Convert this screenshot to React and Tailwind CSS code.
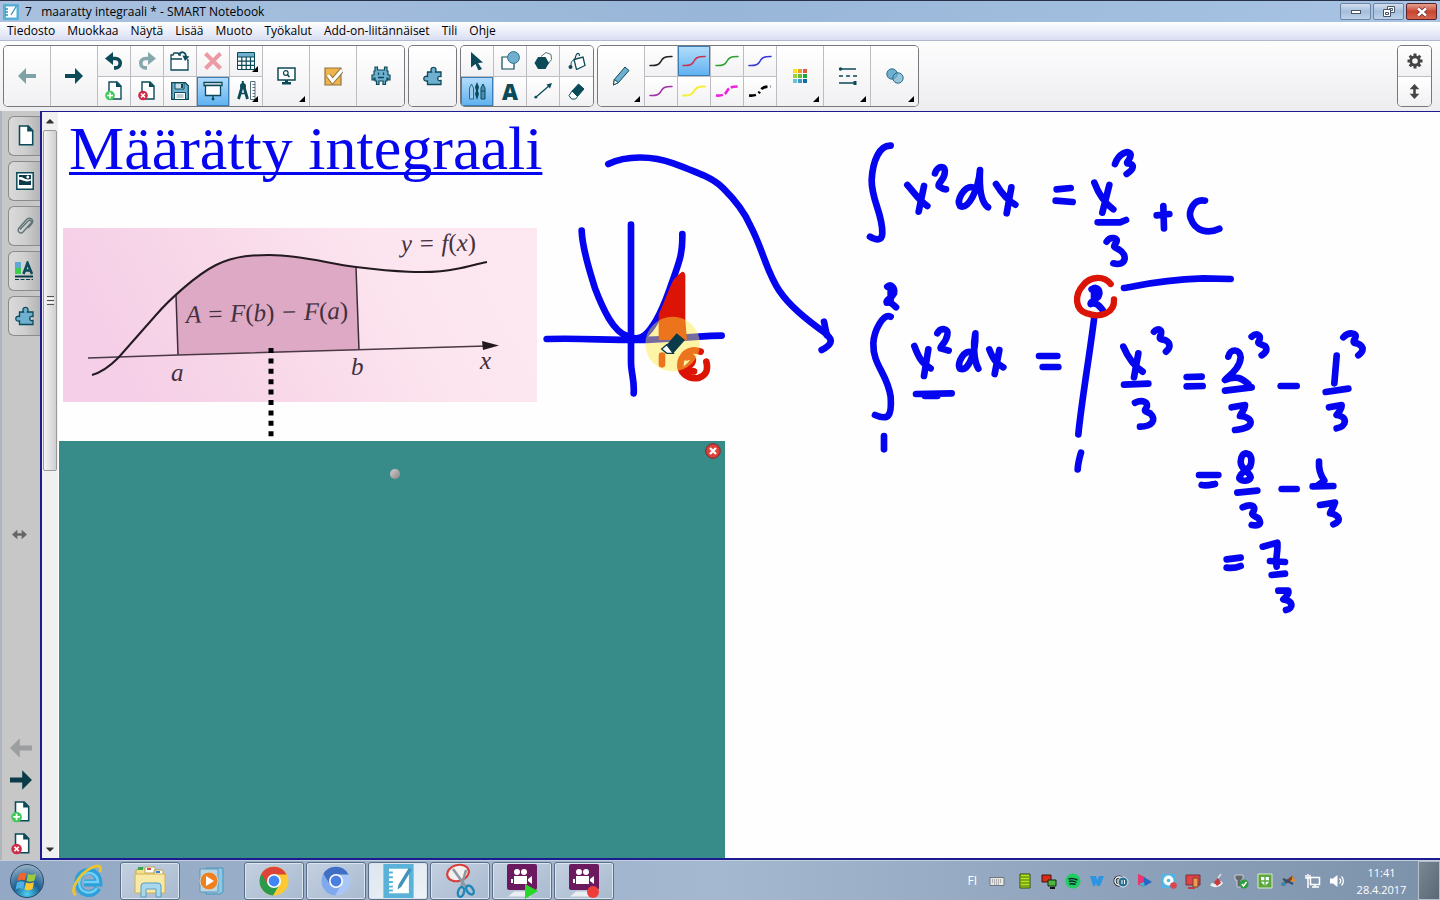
import { FaCaretUp, FaCaretDown } from 'react-icons/fa';
import clsx from 'clsx';

const DARK = '#0b4a59';
const SKY = '#6fafd0';

const menus = ['Tiedosto', 'Muokkaa', 'Näytä', 'Lisää', 'Muoto', 'Työkalut', 'Add-on-liitännäiset', 'Tili', 'Ohje'];

function Svg({ w = 20, h = w, vb, children }) {
  return (
    <svg width={w} height={h} viewBox={vb || `0 0 ${w} ${h}`} fill="none" className="shrink-0">
      {children}
    </svg>
  );
}

// ---------- toolbar icons ----------

function Arrow({ left, color = DARK, size = 18 }) {
  return (
    <Svg w={size} vb="0 0 18 18">
      <path d={left ? 'M0 9l8-8v6h10v4H8v6z' : 'M18 9l-8-8v6H0v4h10v6z'} fill={color} />
    </Svg>
  );
}

function Undo({ flip, color = DARK }) {
  return (
    <Svg w={18}>
      <g transform={flip ? 'matrix(-1 0 0 1 18 0)' : undefined}>
        <path d="M8 0v13L0 6.500z" fill={color} />
        <path d="M6 6.500h4.500a4.700 4.700 0 0 1 0 9.400H9" stroke={color} strokeWidth="3.600" />
      </g>
    </Svg>
  );
}

function PageIcon({ badge, plain }) {
  return (
    <Svg w={plain ? 20 : 18} h={plain ? 22 : 20} vb="0 0 18 20">
      <path d="M4 1h8l4 4v13H4z" fill="#fff" stroke={DARK} strokeWidth="1.400" />
      <path d="M11 0.500v5.500h5.500z" fill={DARK} />
      {badge && <circle cx="5" cy="14.500" r="4.800" fill={badge === 'add' ? '#3fc95a' : '#cf2a48'} />}
      {badge === 'add' && <path d="M5 11.500v6M2 14.500h6" stroke="#fff" strokeWidth="1.600" />}
      {badge === 'del' && <path d="M3 12.500l4 4M7 12.500l-4 4" stroke="#fff" strokeWidth="1.600" />}
    </Svg>
  );
}

function OpenIcon() {
  return (
    <Svg w={20}>
      <path d="M1 19V4h2l1-2h4l1 2h2M17 9h1v10H1V8h11" fill="#fff" stroke={DARK} strokeWidth="1.300" />
      <path d="M9 3c3-3 7-2 7 3" stroke={DARK} strokeWidth="1.800" />
      <path d="M12.500 4.500l7 1-4.500 4.500z" fill={DARK} />
    </Svg>
  );
}

function SaveIcon() {
  return (
    <Svg w={18}>
      <path d="M0.700 0.700h13.600l3 3v13.600H0.700z" fill={SKY} stroke={DARK} strokeWidth="1.300" />
      <path d="M4 1h9v6H4z" fill="#c8dfea" stroke={DARK} />
      <path d="M10 2h2v4h-2z" fill={DARK} />
      <path d="M3.500 10.500h11v7h-11z" fill="#fff" stroke={DARK} />
      <path d="M5.500 13h7M5.500 15h7" stroke="#7d9aa5" />
    </Svg>
  );
}

function CrossIcon() {
  return (
    <Svg w={18}>
      <path d="M1.500 1.500l15 15M16.500 1.500l-15 15" stroke="#ee9aa4" strokeWidth="4" />
    </Svg>
  );
}

function ScreenIcon() {
  return (
    <Svg w={20}>
      <path d="M1 1.500h18v3H1z" fill="#fff" stroke={DARK} strokeWidth="1.300" />
      <path d="M2.500 4.500h15v10h-15z" fill="#fff" stroke={DARK} strokeWidth="1.300" />
      <path d="M10 14.500v4" stroke={DARK} strokeWidth="1.300" />
      <circle cx="10" cy="18" r="1.400" fill={DARK} />
    </Svg>
  );
}

function TableIcon() {
  return (
    <Svg w={18}>
      <path d="M0.500 0.500h17v17h-17z" fill="#fff" stroke={DARK} />
      <path d="M1 1h16v4H1z" fill={SKY} />
      <path d="M0 5h18M0 9.200h18M0 13.400h18M4.800 5v13M9.200 5v13M13.500 5v13" stroke={DARK} strokeWidth="1.200" />
    </Svg>
  );
}

function MeasureIcon() {
  return (
    <Svg w={19} h={20}>
      <path d="M5.800 0v4" stroke={DARK} strokeWidth="2" />
      <circle cx="6" cy="5" r="3" fill={DARK} />
      <path d="M5 6L1.500 18M7 6l3.500 12" stroke={DARK} strokeWidth="2.800" />
      <path d="M2 12.500h8" stroke={DARK} strokeWidth="1.600" />
      <path d="M13.500 0.500h4.500v18h-4.500z" fill="#fff" stroke="#58707a" />
      <path d="M15.500 3.500H18M15.500 6.500H18M15.500 9.500H18M15.500 12.500H18M15.500 15.500H18" stroke="#58707a" />
    </Svg>
  );
}

function MonitorIcon() {
  return (
    <Svg w={19} h={18}>
      <path d="M1 1h17v12H1z" fill="#fff" stroke={DARK} strokeWidth="1.500" />
      <circle cx="8.800" cy="6" r="2.300" stroke={DARK} strokeWidth="1.200" />
      <path d="M10.500 7.800l2 2.200" stroke={DARK} strokeWidth="1.600" />
      <path d="M8 13h3v2h3v2.500H5V15h3z" fill={DARK} />
    </Svg>
  );
}

function CheckIcon() {
  return (
    <Svg w={19}>
      <path d="M1 1h16v17H1z" fill="#f0b44c" stroke="#8d7440" strokeWidth="1.200" />
      <path d="M4 8l4.500 6L18 3" stroke="#8d7440" strokeWidth="5" />
      <path d="M4 8l4.500 6L18 3" stroke="#fff" strokeWidth="3.200" />
    </Svg>
  );
}

function InvaderIcon() {
  return (
    <Svg w={20}>
      <path
        d="M4 1h2.500v3h7V1H16v4h1v4h2v5h-2v-2h-1v3h-1.500v3.500H12V15H8v3.500H5.500V15H4v-3H3v2H1V9h2V5h1z"
        fill={SKY}
        stroke={DARK}
        strokeWidth="1.200"
      />
      <path d="M7.500 6.500v2.500M12.500 6.500v2.500M7 11.500h6" stroke={DARK} strokeWidth="1.300" />
    </Svg>
  );
}

function PuzzleIcon() {
  return (
    <Svg w={20}>
      <path
        d="M4.500 6H8.500C7.300 3.500 8 1.300 10.500 1.300S13.700 3.500 12.500 6H18V10.500C15.500 10 14.700 11.300 14.700 12.500S15.500 15 18 14.500V18.500H4.500V15C2.500 15.500 0.800 14.700 0.800 12.700S2.500 9.800 4.500 10.500z"
        fill={SKY}
        stroke={DARK}
        strokeWidth="1.300"
      />
    </Svg>
  );
}

function PointerIcon() {
  return (
    <Svg w={14} h={18}>
      <path d="M1 0l12 10.500-5 0.500 4 6-3.500 1.500L5.500 12 1 15.500z" fill={DARK} />
    </Svg>
  );
}

function ShapesIcon() {
  return (
    <Svg w={19}>
      <path d="M1 6h12v12H1z" fill="#fff" stroke={DARK} strokeWidth="1.200" />
      <circle cx="12.500" cy="6.500" r="5.900" fill={SKY} stroke="#2d6f88" />
    </Svg>
  );
}

function PolygonIcon() {
  return (
    <Svg w={18}>
      <path d="M7 4.500l5-4 5 2 0.500 5-4 5" fill="#fff" stroke="#58707a" />
      <path d="M4 5h7.500l3.500 6-3.500 6H4l-3.500-6z" fill={DARK} />
    </Svg>
  );
}

function BucketIcon() {
  return (
    <Svg w={18}>
      <path d="M6 7.500l9-2.500 2 8.500-8.500 4z" fill="#fff" stroke={DARK} strokeWidth="1.300" />
      <path d="M7 7.500c1-7 4-8 4.500-3.500" stroke={DARK} strokeWidth="1.200" />
      <path d="M6 8C3 9 3 11 3 14" stroke={DARK} />
      <circle cx="2.500" cy="15" r="2" fill={DARK} />
    </Svg>
  );
}

function PensIcon() {
  return (
    <Svg w={18}>
      <path d="M1.500 6l2-4 2 4v11h-4z" fill="#9dcbe8" stroke="#2c6a83" />
      <path d="M9 0l2 5-1 4 1 3-2 6-2-6 1-3-1-4z" fill={DARK} />
      <path d="M13 6l2-4 2 4v11h-4z" fill="#4c8fae" stroke={DARK} />
      <path d="M13 9h4" stroke={DARK} />
    </Svg>
  );
}

function LineIcon() {
  return (
    <Svg w={18} h={16}>
      <path d="M1.500 14.500L16 2" stroke={DARK} strokeWidth="1.300" />
      <circle cx="1.800" cy="14.200" r="1.400" fill={DARK} />
      <path d="M18 0l-5.500 1.500 3.500 4z" fill={DARK} />
    </Svg>
  );
}

function EraserIcon() {
  return (
    <Svg w={17} h={17}>
      <path d="M10.500 1l5.500 5-6.500 7.500-5.500-5.500z" fill={DARK} stroke={DARK} />
      <path d="M4 8l5.500 5.500-2 2.500H3.500L1 12.500z" fill="#fff" stroke={DARK} />
    </Svg>
  );
}

function PencilIcon() {
  return (
    <Svg w={18} h={20}>
      <path d="M13 1l4 3.500L6.500 16.500l-5 2.500 0.800-5.500z" fill={SKY} stroke={DARK} />
      <path d="M2.300 13.500l4.200 3-5 2.500z" fill="#fff" stroke={DARK} />
    </Svg>
  );
}

function Squiggle({ color, width = 1.5, dash }) {
  return (
    <Svg w={24} h={12}>
      <path
        d="M1 10.500c6 0.500 9-1 10.500-3.500C13.500 3 15 1.500 23 1.500"
        stroke={color}
        strokeWidth={width}
        strokeDasharray={dash}
        strokeLinecap={dash ? 'butt' : 'round'}
      />
    </Svg>
  );
}

function ColorGrid() {
  const colors = ['#fbe21a', '#f49a2a', '#e0574c', '#a3cf2f', '#5fbf3c', '#17a838', '#6cc0d8', '#3a9bc8', '#1468a8'];
  return (
    <span className="grid grid-cols-3 gap-px">
      {colors.map((c) => (
        <span key={c} className="size-[4px]" style={{ backgroundColor: c }} />
      ))}
    </span>
  );
}

function LineStyles() {
  return (
    <Svg w={19} h={18}>
      <path d="M2 2h16M1 16h16" stroke={DARK} strokeWidth="1.300" />
      <path d="M1 9h18" stroke={DARK} strokeWidth="1.300" strokeDasharray="4 3" />
      <circle cx="2.500" cy="2" r="1.700" fill={DARK} />
      <path d="M15.500 14h3v4h-3z" fill={DARK} />
    </Svg>
  );
}

function Circles() {
  return (
    <Svg w={18} h={16}>
      <circle cx="6" cy="6" r="5.200" fill={SKY} stroke="#2d6f88" />
      <circle cx="12" cy="10" r="5.200" fill={SKY} fillOpacity="0.700" stroke="#2d6f88" />
    </Svg>
  );
}

function GearIcon() {
  return (
    <Svg w={16}>
      <circle cx="8" cy="8" r="4.200" stroke="#444" strokeWidth="2.800" />
      <path
        d="M8 0.500v3M8 12.500v3M0.500 8h3M12.500 8h3M2.700 2.700l2 2M11.300 11.300l2 2M2.700 13.300l2-2M11.300 4.700l2-2"
        stroke="#444"
        strokeWidth="3"
      />
    </Svg>
  );
}

function StretchIcon({ horizontal }) {
  return (
    <Svg w={15} vb="0 0 14 14">
      <g transform={horizontal ? 'rotate(90 7 7)' : undefined}>
        <path d="M7 0l4.500 5H8.200v4h3.300L7 14 2.500 9h3.300V5H2.500z" fill={horizontal ? '#666' : '#444'} />
      </g>
    </Svg>
  );
}

// ---------- toolbar ----------

function Tool({ label, active, menu, children }) {
  return (
    <button
      type="button"
      aria-label={label}
      className={clsx(
        'relative flex items-center justify-center flex-1',
        active
          ? 'bg-linear-to-b from-[#b4defb] to-[#5cb0f0] ring-1 ring-inset ring-[#3d7fb5]'
          : 'bg-linear-to-b from-white to-[#f1f1f3]'
      )}
    >
      {children}
      {menu && <span className="absolute right-1 bottom-1 border-[3px] border-black border-t-transparent border-l-transparent" />}
    </button>
  );
}

function Group({ children }) {
  return (
    <div className="flex h-[60px] divide-x divide-[#bcbcc2] rounded-[4px] ring-1 ring-[#77777c] overflow-hidden">
      {children}
    </div>
  );
}

function Stack({ children }) {
  return <div className="flex flex-col w-[33px] divide-y divide-[#bcbcc2]">{children}</div>;
}

function Wide({ children }) {
  return <div className="flex w-[47px]">{children}</div>;
}

function Toolbar() {
  return (
    <div className="flex items-center justify-between h-[70px] pl-1 pr-[9px] bg-linear-to-b from-[#fdfdfe] to-[#ededf0]">
      <div className="flex gap-[5px]">
        <Group>
          <Wide><Tool label="Edellinen sivu"><Arrow left color="#7ea2a5" /></Tool></Wide>
          <Wide><Tool label="Seuraava sivu"><Arrow /></Tool></Wide>
          <Stack>
            <Tool label="Kumoa"><Undo /></Tool>
            <Tool label="Lisää sivu"><PageIcon badge="add" /></Tool>
          </Stack>
          <Stack>
            <Tool label="Tee uudelleen"><Undo flip color="#86a8ac" /></Tool>
            <Tool label="Poista sivu"><PageIcon badge="del" /></Tool>
          </Stack>
          <Stack>
            <Tool label="Avaa"><OpenIcon /></Tool>
            <Tool label="Tallenna"><SaveIcon /></Tool>
          </Stack>
          <Stack>
            <Tool label="Poista"><CrossIcon /></Tool>
            <Tool label="Näytön varjostin" active><ScreenIcon /></Tool>
          </Stack>
          <Stack>
            <Tool label="Taulukko" menu><TableIcon /></Tool>
            <Tool label="Mittaustyökalut" menu><MeasureIcon /></Tool>
          </Stack>
          <Wide><Tool label="Näytä sivu" menu><MonitorIcon /></Tool></Wide>
          <Wide><Tool label="Vastaus"><CheckIcon /></Tool></Wide>
          <Wide><Tool label="Aktiviteetit"><InvaderIcon /></Tool></Wide>
        </Group>
        <Group>
          <Wide><Tool label="Lisäosat"><PuzzleIcon /></Tool></Wide>
        </Group>
        <Group>
          <Stack>
            <Tool label="Valitse"><PointerIcon /></Tool>
            <Tool label="Kynät" active><PensIcon /></Tool>
          </Stack>
          <Stack>
            <Tool label="Muodot"><ShapesIcon /></Tool>
            <Tool label="Teksti">
              <span className="font-['Noto_Sans'] text-[22px] leading-6 font-black text-[#0b4a59]">A</span>
            </Tool>
          </Stack>
          <Stack>
            <Tool label="Monikulmiot"><PolygonIcon /></Tool>
            <Tool label="Viivat"><LineIcon /></Tool>
          </Stack>
          <Stack>
            <Tool label="Täyttö"><BucketIcon /></Tool>
            <Tool label="Pyyhekumi"><EraserIcon /></Tool>
          </Stack>
        </Group>
        <Group>
          <Wide><Tool label="Kynätyyppi" menu><PencilIcon /></Tool></Wide>
          <Stack>
            <Tool label="Musta kynä"><Squiggle color="#222" /></Tool>
            <Tool label="Violetti kynä"><Squiggle color="#a030a8" /></Tool>
          </Stack>
          <Stack>
            <Tool label="Punainen kynä" active><Squiggle color="#d03050" /></Tool>
            <Tool label="Keltainen kynä"><Squiggle color="#f6ee3c" width={2} /></Tool>
          </Stack>
          <Stack>
            <Tool label="Vihreä kynä"><Squiggle color="#30a030" /></Tool>
            <Tool label="Katkoviiva"><Squiggle color="#f020e0" width={2.6} dash="7 2" /></Tool>
          </Stack>
          <Stack>
            <Tool label="Sininen kynä"><Squiggle color="#3838d8" /></Tool>
            <Tool label="Pisteviiva"><Squiggle color="#000" width={2.6} dash="7 3 2 3" /></Tool>
          </Stack>
          <Wide><Tool label="Väri" menu><ColorGrid /></Tool></Wide>
          <Wide><Tool label="Viivatyyli" menu><LineStyles /></Tool></Wide>
          <Wide><Tool label="Läpinäkyvyys" menu><Circles /></Tool></Wide>
        </Group>
      </div>
      <Group>
        <Stack>
          <Tool label="Asetukset"><GearIcon /></Tool>
          <Tool label="Siirrä työkalurivi"><StretchIcon /></Tool>
        </Stack>
      </Group>
    </div>
  );
}

// ---------- title bar ----------

function WindowButton({ label, close, children }) {
  return (
    <button
      type="button"
      aria-label={label}
      className={clsx(
        'flex items-center justify-center w-[31px] h-[17px] rounded-[2px] border',
        close
          ? 'border-[#5a2028] bg-linear-to-b from-[#e3a08f] via-[#c9452f] to-[#d4654c]'
          : 'border-[#6d84a3] bg-linear-to-b from-[#d3e0f0] via-[#a5bedb] to-[#bdd2ea]'
      )}
    >
      {children}
    </button>
  );
}

function TitleBar() {
  return (
    <header className="flex items-center h-[22px] pl-[3px] pr-[3px] border-t border-[#27324a] bg-linear-to-r from-[#a9c1df] via-[#98b6d8] to-[#a9c4e4]">
      <Svg w={16}>
        <path d="M0 0h16v16H0z" fill="#58b0d8" />
        <path d="M3 2.500h10.500v11H3z" fill="#fff" />
        <path d="M2 5h3M2 8h3M2 11h3M13.500 2L8 11" stroke="#3a8fb8" strokeWidth="1.300" />
      </Svg>
      <h1 className="flex-1 pl-[6px] text-[12px] leading-4 text-black whitespace-pre">7   maaratty integraali * - SMART Notebook</h1>
      <div className="flex gap-0.5">
        <WindowButton label="Pienennä">
          <span className="w-[10px] h-[4px] border border-[#4a5568] bg-white" />
        </WindowButton>
        <WindowButton label="Palauta">
          <Svg w={12} h={11}>
            <path d="M4.500 0.500h7v6h-7z" fill="#fff" stroke="#4a5568" />
            <path d="M6.500 2.500h3v2h-3z" stroke="#4a5568" />
            <path d="M0.500 3.500h7v7h-7z" fill="#fff" stroke="#4a5568" />
            <path d="M2.500 6.500h3v2h-3z" stroke="#4a5568" />
          </Svg>
        </WindowButton>
        <WindowButton label="Sulje" close>
          <Svg w={12} h={10}>
            <path d="M2 1.500l8 7M10 1.500l-8 7" stroke="#5c3038" strokeWidth="4" />
            <path d="M2 1.500l8 7M10 1.500l-8 7" stroke="#fff" strokeWidth="2.400" />
          </Svg>
        </WindowButton>
      </div>
    </header>
  );
}

function MenuBar() {
  return (
    <nav className="flex items-center gap-3 h-[19px] pl-[7px] bg-linear-to-b from-white via-[#eceffa] to-[#d9def2] border-b border-[#b4b8cc]">
      {menus.map((m) => (
        <button key={m} type="button" className="text-[12px] leading-4 text-black">
          {m}
        </button>
      ))}
    </nav>
  );
}

// ---------- side bar ----------

function GalleryIcon() {
  return (
    <Svg w={18}>
      <path d="M0.800 0.800h16.400v16.400H0.800z" fill="#fff" stroke={DARK} strokeWidth="1.500" />
      <path d="M3 3h12v10H3z" fill="#0b3a48" />
      <path d="M3 5.500c4-2 5 3.500 12 1.500v1.500C9 11 7 7.500 3 7.500z" fill="#fff" />
      <circle cx="11.800" cy="5" r="1.500" fill="#fff" />
    </Svg>
  );
}

function ClipIcon() {
  return (
    <Svg w={18} h={20}>
      <path
        d="M4 13.500L12 5c2-2 4.500 0.500 2.700 2.500L7 16c-2.500 2.500-6.500-0.500-4-4L10.500 3.500c3-3 8 0 5.500 4L12 12"
        stroke="#5f7478"
        strokeWidth="1.400"
      />
    </Svg>
  );
}

function PropertiesIcon() {
  return (
    <Svg w={19} h={20}>
      <path d="M0 1h6v6H0z" fill="#5fa8d3" />
      <path d="M0 7h6v6H0z" fill="#3ccf4e" />
      <path d="M8.500 13L12.500 2l4.500 11M10 9.500h5.500" stroke={DARK} strokeWidth="2.600" />
      <path d="M0 15.500h18" stroke="#0b3a48" strokeWidth="2" />
      <path d="M0 18.500h18" stroke="#0b3a48" strokeDasharray="4 1.500" />
    </Svg>
  );
}

const tabs = [
  { label: 'Sivulajittelu', icon: <PageIcon plain /> },
  { label: 'Galleria', icon: <GalleryIcon /> },
  { label: 'Liitteet', icon: <ClipIcon /> },
  { label: 'Ominaisuudet', icon: <PropertiesIcon /> },
  { label: 'Lisäosat', icon: <PuzzleIcon /> },
];

const pageButtons = [
  { label: 'Edellinen', icon: <Arrow left color="#9c9f9f" size={22} /> },
  { label: 'Seuraava', icon: <Arrow color="#0b3a48" size={22} /> },
  { label: 'Uusi sivu', icon: <PageIcon badge="add" plain /> },
  { label: 'Poista sivu', icon: <PageIcon badge="del" plain /> },
];

function SideBar() {
  return (
    <aside className="flex flex-col w-10 shrink-0 bg-[#c7c7c7] border-l-2 border-[#aeb4bb] pt-[5px]">
      <div className="flex flex-col gap-[5px] pl-[6px]">
        {tabs.map((t) => (
          <button
            key={t.label}
            type="button"
            aria-label={t.label}
            className="flex items-center justify-center h-10 rounded-l-md border border-r-0 border-[#8b8b8b] bg-linear-to-r from-[#dadada] via-[#cfcfcf] to-[#b4b4b4]"
          >
            {t.icon}
          </button>
        ))}
      </div>
      <button type="button" aria-label="Siirrä sivupalkki" className="flex flex-1 items-center pl-[10px]">
        <StretchIcon horizontal />
      </button>
      <div className="flex flex-col">
        {pageButtons.map((b) => (
          <button key={b.label} type="button" aria-label={b.label} className="flex items-center justify-center h-8">
            {b.icon}
          </button>
        ))}
      </div>
    </aside>
  );
}

function ScrollBar() {
  return (
    <div className="flex flex-col items-center w-[16px] shrink-0 bg-[#f0f0f0] text-[#333]">
      <FaCaretUp className="h-[18px] w-2" />
      <div className="flex flex-col items-center justify-center gap-px w-[14px] h-[341px] rounded-[2px] border border-[#9a9a9a] bg-linear-to-r from-[#f4f4f4] to-[#cfcfd2]">
        <span className="w-[7px] h-px bg-[#555]" />
        <span className="w-[7px] h-px bg-white" />
        <span className="w-[7px] h-px bg-[#555]" />
        <span className="w-[7px] h-px bg-white" />
        <span className="w-[7px] h-px bg-[#555]" />
      </div>
      <FaCaretDown className="mt-auto h-[18px] w-2" />
    </div>
  );
}

// ---------- board ----------

function IntegralFigure() {
  return (
    <svg
      viewBox="0 0 474 174"
      className="absolute left-[5px] top-[116px] w-[474px] h-[174px] font-['Liberation_Serif',serif]"
      fill="none"
    >
      <defs>
        <linearGradient id="paper" x1="0" y1="0.200" x2="1" y2="0">
          <stop offset="0" stopColor="#f5cfe7" />
          <stop offset="0.350" stopColor="#f9dae9" />
          <stop offset="0.650" stopColor="#fce5ef" />
          <stop offset="1" stopColor="#fde8f1" />
        </linearGradient>
      </defs>
      <path d="M0 0h474v174H0z" fill="url(#paper)" />
      <path d="M113 67C125 57 140 43 153 37C173 27 193 27 206 27C240 27 266 36 293 39L296 122L115 127z" fill="#dda9c5" />
      <path d="M113 67L115 127M293 39L296 122" stroke="#3d2c38" strokeWidth="1.500" />
      <path d="M25 130L115 127L423 118" stroke="#4a3844" strokeWidth="1.400" />
      <path d="M419 113L436 117.500L420 122z" fill="#221a20" />
      <path
        d="M29 147C43 143 51 134 56 129L93 87C106 72 133 47 153 37C173 27 193 27 206 27C240 27 266 36 293 39C326 43 366 47 393 41C406 39 413 36 424 34"
        stroke="#221a20"
        strokeWidth="2"
      />
      <g fill="#43303c" fontSize="25" fontStyle="italic">
        <text x="123" y="95" transform="rotate(-1.500 123 95)">
          A = F<tspan fontStyle="normal">(</tspan>b<tspan fontStyle="normal">)</tspan> − F
          <tspan fontStyle="normal">(</tspan>a<tspan fontStyle="normal">)</tspan>
        </text>
        <text x="338" y="24" transform="rotate(-1 338 24)">
          y = f<tspan fontStyle="normal">(</tspan>x<tspan fontStyle="normal">)</tspan>
        </text>
        <text x="108" y="153">a</text>
        <text x="288" y="147">b</text>
        <text x="417" y="141">x</text>
      </g>
    </svg>
  );
}

const graphInk = [
  'M205 72C260 45 340 48 400 70C480 100 520 115 550 145C590 185 615 220 630 255C670 330 680 400 720 455C750 500 800 540 860 582',
  'M852 545L860 585C880 600 875 615 845 630',
  'M125 272C127 330 150 395 165 445C190 510 220 575 262 588C285 600 305 595 320 580C350 550 375 490 395 430C420 360 428 340 427 282',
  'M273 254V665C273 700 284 720 281 760',
  'M20 597C130 594 180 600 300 600C380 600 420 590 545 587',
];

const firstInk = [
  'M122 47C90 45 68 90 65 150C64 210 98 250 97 310C96 332 80 332 60 320',
  'M172 165C195 190 205 210 232 228M222 168L206 245',
  'M255 130C262 105 290 105 284 130C282 150 262 160 266 168C272 172 280 178 288 178',
  'M368 172C345 165 318 210 330 228C355 240 385 180 390 120C388 160 390 215 414 232',
  'M438 162C455 190 470 210 496 224M484 172L470 250',
  'M620 178L662 174M617 212L668 216',
  'M733 158C745 190 765 220 790 238M778 165L757 248',
  'M743 277H810L828 270',
  'M795 102C805 72 838 55 842 75C840 92 828 95 832 100C856 100 852 118 830 132',
  'M770 335C780 318 808 322 798 338C788 350 792 352 806 358C835 375 828 410 790 400',
  'M920 256L958 252M940 228L942 295',
  'M1065 212C1030 205 1015 245 1022 265C1035 305 1075 312 1108 296',
  'M112 470C125 460 135 475 132 490C125 505 105 510 110 518C125 515 130 525 138 532M122 470V510',
  'M122 560C100 550 72 600 70 640C68 705 112 730 122 800C126 860 115 872 75 855',
  'M102 918V958',
  'M193 648C205 680 215 700 242 715M235 658L222 738',
  'M262 610C272 590 298 595 292 615C288 640 268 650 272 655L296 662',
  'M365 668C345 655 318 700 330 716C355 725 378 670 376 610C370 640 370 690 385 716',
  'M418 658C430 690 440 700 460 712M448 660L434 732',
  'M567 678H622M578 711H625',
  'M198 792L305 790M225 798H262',
];

const secondInk = [
  'M162 54C200 50 240 32 400 25L482 27',
  'M72 148C58 260 34 400 25 493',
  'M33 548C28 565 24 580 23 598',
  'M65 58C85 45 92 65 85 80C70 95 60 95 62 102C80 95 90 110 98 120M72 65V100',
  'M160 230C175 265 195 290 218 305M205 250L192 322',
  'M162 344L235 341',
  'M252 185C262 172 282 178 270 200C268 208 272 208 285 210C305 220 300 235 288 245',
  'M195 398C215 388 240 395 228 415C220 425 230 425 240 430C262 450 245 470 210 470',
  'M350 321L395 320M350 349L398 348',
  'M475 260C480 235 510 235 512 262C510 295 480 315 465 330C500 315 515 325 535 342',
  'M465 362L545 352',
  'M545 200C560 187 575 195 567 213C560 222 575 222 585 228C595 240 585 250 575 256',
  'M485 412L525 405C525 420 512 430 510 438C550 440 560 475 495 480',
  'M632 348H680',
  'M800 257L793 340',
  'M767 366L835 356',
  'M820 202C835 185 865 187 855 205C848 215 850 220 862 220C885 230 880 245 865 256',
  'M777 412L815 405C815 420 805 428 800 435C835 440 830 470 800 475',
  'M387 615H445M395 645C410 648 420 645 435 642',
  'M528 550C545 552 548 570 540 590C530 600 508 610 508 625C515 635 538 635 542 622C540 605 512 600 512 575C512 560 520 550 528 550',
  'M502 668L562 662',
  'M518 712C540 702 560 705 550 725C540 735 555 738 565 745C580 765 560 768 545 765',
  'M635 657H680',
  'M747 575C745 600 755 620 763 632L745 645',
  'M728 649L790 648',
  'M750 705L795 698C790 715 780 725 780 730C810 735 815 755 790 763',
  'M470 868L512 863M470 893C485 895 500 893 512 888',
  'M578 830L622 818C625 840 615 870 620 890M600 873L645 876',
  'M605 915L645 911',
  'M625 962L655 962C658 975 645 982 640 988C670 992 672 1015 648 1020',
];

// pen strokes are kept in the pen's own units, three to a pixel
function Ink({ x, y, w, h, strokes, children }) {
  return (
    <svg x={x} y={y} width={w} height={h} viewBox={`0 0 ${w * 3} ${h * 3}`} overflow="visible">
      <g stroke="#0505f0" strokeWidth="20" strokeLinecap="round" strokeLinejoin="round">
        {strokes.map((d) => (
          <path key={d} d={d} />
        ))}
      </g>
      {children}
    </svg>
  );
}

function Board() {
  return (
    <main className="relative flex-1 overflow-hidden bg-[#fefefe]">
      <h2 className="absolute left-[11px] top-0 font-['Liberation_Serif',serif] text-[62px] leading-[72px] text-[#0505f0] whitespace-nowrap underline decoration-[3px] underline-offset-[3px] [text-decoration-skip-ink:none]">
        Määrätty integraali
      </h2>
      <IntegralFigure />
      <svg
        viewBox="58 112 1382 747"
        preserveAspectRatio="xMinYMin slice"
        className="absolute inset-0 size-full"
        fill="none"
      >
        <path d="M271 348V437" stroke="#000" strokeWidth="5" strokeDasharray="5 5.400" />
        <Ink x={540} y={140} w={320} h={340} strokes={graphInk}>
          <path
            d="M427 395C433 395 436 400 436 408V540L441 600H356V522C372 490 385 450 400 420C410 410 418 400 427 395z"
            fill="#dc1405"
          />
          <g stroke="#dc1405" strokeWidth="20" strokeLinecap="round" strokeLinejoin="round">
            <path d="M366 647V673" />
            <path d="M482 635C455 625 430 635 422 665C415 700 445 718 475 714C500 705 505 690 499 665" />
            <path d="M440 652C460 640 465 665 450 675C435 690 430 690 462 694" />
          </g>
          <circle cx="398" cy="612" r="82" fill="#ffe93c" fillOpacity="0.450" />
          <path d="M410 580L435 600L400 640L380 614z" fill="#0b3a48" />
          <path d="M380 614L400 640H380L365 627z" fill="#fff" stroke="#0b3a48" strokeWidth="4" />
        </Ink>
        <Ink x={850} y={130} w={400} h={340} strokes={firstInk} />
        <Ink x={1070} y={270} w={320} h={350} strokes={secondInk}>
          <path
            d="M122 42C100 15 60 20 40 45C12 75 15 120 50 130C90 145 135 130 132 88"
            stroke="#dc1405"
            strokeWidth="19"
            strokeLinecap="round"
          />
        </Ink>
      </svg>
      <section className="absolute left-px top-[329px] bottom-0 w-[666px] bg-[#378c8a]">
        <button type="button" aria-label="Sulje varjostin" className="absolute right-1 top-[2px]">
          <Svg w={16}>
            <circle cx="8" cy="8" r="7.300" fill="#dc4038" stroke="#7c2a2c" />
            <path d="M5 5l6 6M11 5l-6 6" stroke="#fff" strokeWidth="2.400" />
          </Svg>
        </button>
        <span className="absolute left-[331px] top-7 size-[10px] rounded-full bg-linear-to-br from-[#d8d0d0] to-[#8a8484]" />
      </section>
    </main>
  );
}

// ---------- task bar ----------

function StartOrb() {
  return (
    <Svg w={36} vb="0 0 36 36">
      <defs>
        <radialGradient id="orb" cx="0.500" cy="0.900" r="0.900">
          <stop offset="0" stopColor="#4fd0f0" />
          <stop offset="0.450" stopColor="#1b5f92" />
          <stop offset="1" stopColor="#9cb4c8" />
        </radialGradient>
      </defs>
      <circle cx="18" cy="18" r="16.500" fill="url(#orb)" stroke="#2b4a68" />
      <path d="M10 11c3-2 5-1.500 7.500-0.500l-1.500 7c-2.500-1-4.500-1-7.500 0.500z" fill="#f0652a" />
      <path d="M19 11c2.500 1 5 1 8-0.500l-1.500 7c-3 1.500-5.500 1.500-8 0.500z" fill="#9ccb3c" />
      <path d="M8 19.500c3-1.500 5-1.500 7.500-0.500L14 26c-2.500-1-4.500-1-7.500 0.500z" fill="#4fb0e8" />
      <path d="M17 19.500c2.500 1 5 1 8-0.500l-1.500 7c-3 1.500-5.500 1.500-8 0.500z" fill="#fbc72f" />
    </Svg>
  );
}

function ExplorerE() {
  return (
    <Svg w={34}>
      <path d="M27 24c-5 9-19 7-20-5C6 5 27 2 28 19H13" stroke="#2f9fdc" strokeWidth="7" />
      <path d="M26 24c-5 7-17 6-18-5C8 7 26 5 27 18H13" stroke="#6fd0f4" strokeWidth="2.500" />
      <path d="M5 31C-2 27 8 10 20 4c8-4 11-2 9 4" stroke="#ecc52c" strokeWidth="2.600" />
    </Svg>
  );
}

function FolderIcon() {
  return (
    <Svg w={34}>
      <path d="M3 6l7-3 2 3h17v22H3z" fill="#f5e08c" stroke="#c9a544" />
      <path d="M12 3h10v6H12zM21 6h9v5h-9z" fill="#fff" stroke="#b9a860" />
      <path d="M5 3h5v3H5z" fill="#34a853" />
      <path d="M14 4h4v2h-4z" fill="#d9483b" />
      <path d="M23 7h4v2h-4z" fill="#3b83d9" />
      <path d="M2 10h30v19H2z" fill="#f8e9a6" stroke="#d2b050" />
      <path d="M8 33V22q0-3 3-3h14q3 0 3 3v11h-5v-8H13v8z" fill="#a8d8ee" stroke="#5a9cc0" />
    </Svg>
  );
}

function PlayerIcon() {
  return (
    <Svg w={30}>
      <path d="M9 2h17v24l-3 2H9z" fill="#8cc8e4" stroke="#4d93b8" />
      <path d="M3 3h18v23H3z" fill="#b9d5e6" stroke="#5f97b8" />
      <circle cx="12" cy="15" r="9" fill="#f07f1e" stroke="#c9d8e0" />
      <path d="M9 10l8 5-8 5z" fill="#fff" />
    </Svg>
  );
}

function BrowserIcon({ colors }) {
  const [top, left, right, hub] = colors;
  return (
    <Svg w={30}>
      <circle cx="15" cy="15" r="14.500" fill={right} />
      <path d="M2.400 7.800A14.500 14.500 0 0 0 14 29.500L20.500 18.500L15 15z" fill={left} />
      <path d="M2.400 7.800A14.500 14.500 0 0 1 27.600 8.500H15L9 18.500z" fill={top} />
      <circle cx="15" cy="15" r="7" fill="#fff" />
      <circle cx="15" cy="15" r="5.400" fill={hub} />
    </Svg>
  );
}

function NotebookIcon() {
  return (
    <Svg w={31} h={34} vb="0 0 32 36">
      <path d="M0 0h32v36H0z" fill="#5ab2d8" />
      <path d="M6 5h21v26H6z" fill="#fff" />
      <path d="M4 9h6M4 14h6M4 19h6M4 24h6M4 28h6" stroke="#5ab2d8" strokeWidth="2" />
      <path d="M27 4l3 2-11 18-4 3 1-5z" fill="#3f93bc" />
    </Svg>
  );
}

function SnipIcon() {
  return (
    <Svg w={32} h={36}>
      <ellipse cx="14" cy="10" rx="11" ry="8" fill="#f4f0f0" stroke="#d8403c" strokeWidth="2.200" transform="rotate(-15 14 10)" />
      <path d="M9 6l13 18M22 7l-5 18" stroke="#8e98a2" strokeWidth="2.600" />
      <ellipse cx="17" cy="29" rx="3" ry="5" stroke="#1f86b8" strokeWidth="2.400" transform="rotate(15 17 29)" />
      <ellipse cx="26" cy="27" rx="3" ry="5" stroke="#1f86b8" strokeWidth="2.400" transform="rotate(-35 26 27)" />
    </Svg>
  );
}

function CamIcon({ recording }) {
  return (
    <Svg w={34} h={36}>
      <path d="M9 28h14l4 6H2z" fill="#e8eef4" stroke="#b8c4d0" />
      <rect x="2" y="1" width="30" height="26" rx="2" fill="#6b1a60" />
      <circle cx="12" cy="9" r="3" fill="#fff" />
      <circle cx="19" cy="9" r="3" fill="#fff" />
      <path d="M9 13h13v8H9zM23 16l4-3v8l-4-3zM6 16h2v4H6z" fill="#fff" />
      {recording ? <circle cx="26" cy="29" r="6" fill="#f03c38" /> : <path d="M20 21l13 7-13 8z" fill="#2bd62b" />}
    </Svg>
  );
}

const apps = [
  { label: 'Internet Explorer', icon: <ExplorerE /> },
  { label: 'Resurssienhallinta', icon: <FolderIcon />, open: true },
  { label: 'Media Player', icon: <PlayerIcon /> },
  { label: 'Chrome', icon: <BrowserIcon colors={['#dc4437', '#2b9a4c', '#fcc934', '#4285f4']} />, open: true },
  { label: 'Chromium', icon: <BrowserIcon colors={['#3f6fc4', '#7fa9ec', '#a9c6f6', '#4a7fe0']} />, open: true },
  { label: 'SMART Notebook', icon: <NotebookIcon />, open: true, current: true },
  { label: 'Leikkaustyökalu', icon: <SnipIcon />, open: true },
  { label: 'Näytön toisto', icon: <CamIcon />, open: true },
  { label: 'Näytön tallennus', icon: <CamIcon recording />, open: true },
];

const tray = [
  { name: 'Muistio', art: <><path d="M3 1h10v14H3z" fill="#b8e61c" stroke="#2a4a10" /><path d="M4 4h8M4 7h8M4 10h8M4 13h8" stroke="#466e10" /></> },
  { name: 'Näytöt', art: <><path d="M1 2h9v7H1z" fill="#dc2a14" stroke="#401510" /><path d="M7 7h8v6H7z" fill="#4fb83c" stroke="#102810" /><path d="M9 15h5" stroke="#111" strokeWidth="2" /></> },
  { name: 'Spotify', art: <><circle cx="8" cy="8" r="7.500" fill="#1fce60" /><path d="M3.500 6c3-1 6-0.500 9 1M4 8.500c3-1 5-0.500 7.500 1M4.500 11c2.500-0.500 4-0.500 6 0.500" stroke="#123" strokeWidth="1.400" /></> },
  { name: 'Wunder', art: <><path d="M1 3h6l1 4 2-4h5l-4 10H8L7 10l-1 3H4z" fill="#2c94e0" /></> },
  { name: 'Pilvi', art: <><circle cx="6" cy="8" r="4" stroke="#222" strokeWidth="3" /><circle cx="6" cy="8" r="4" stroke="#fff" strokeWidth="1.400" /><circle cx="10" cy="9" r="5" fill="#2a6f94" stroke="#dfe8ee" /><path d="M9 7v4M11.500 7v4" stroke="#fff" /></> },
  { name: 'Play', art: <><path d="M1 1l7 3-2 9-5-1z" fill="#e8376c" /><path d="M7 4l8 5-9 5z" fill="#2766c8" /><path d="M2 11l5-2 1 5z" fill="#35bcd8" /></> },
  { name: 'Levy', art: <><path d="M1 1h13v14H1z" fill="#50b4e4" /><circle cx="7.500" cy="7.500" r="5" fill="#fff" /><circle cx="7.500" cy="7.500" r="1.800" fill="#50b4e4" /><circle cx="12.500" cy="12.500" r="3.300" fill="#dc4650" /></> },
  { name: 'Etätyöpöytä', art: <><path d="M1 2h14v10H1z" fill="#e0424c" stroke="#7a3032" /><path d="M8 5h5v9H8z" fill="#e8a050" stroke="#803c28" /><path d="M3 15h7" stroke="#b84040" strokeWidth="2" /></> },
  { name: 'Java', art: <><path d="M2 11c4 3 8 2 11-2" stroke="#eee" strokeWidth="3" /><path d="M5 9l4-4 3 5-4 3z" fill="#c83a3c" /><path d="M9 5l3-4" stroke="#ddd" strokeWidth="1.600" /></> },
  { name: 'USB', art: <><path d="M2 2h8v5H8v7H4V7H2z" fill="#62686c" stroke="#c8ccd0" /><circle cx="11" cy="11" r="4.500" fill="#2c9c3c" /><path d="M8.800 11l1.700 2 3-4" stroke="#fff" strokeWidth="1.500" /></> },
  { name: 'Virustorjunta', art: <><path d="M1 1h14v14H1z" fill="#58a83c" stroke="#dcecd0" /><path d="M4 4h8v5l-4 4-4-4z" fill="#fff" /><path d="M8 4v9M4 8h8" stroke="#58a83c" strokeWidth="1.400" /></> },
  { name: 'Työkalu', art: <><path d="M1 12L12 4" stroke="#7a4a2c" strokeWidth="3" /><path d="M2 6l10 5" stroke="#304c70" strokeWidth="2" /><path d="M11 3l4 5-4 1z" fill="#e48a30" /><circle cx="3" cy="11" r="2" fill="#2c8cc8" /></> },
  { name: 'Verkko', art: <><path d="M5.500 4.500h9v7h-9z" fill="#8296ae" stroke="#fff" strokeWidth="1.500" /><path d="M7 14h7M10 12v2M3 1v14M1 2v3h4V2" stroke="#fff" strokeWidth="1.500" /></> },
  { name: 'Ääni', art: <><path d="M1 5.500h3L8.500 2v12L4 10.500H1z" fill="#fff" /><path d="M10.500 5.500c1.500 1.500 1.500 3.500 0 5M12.500 3.500c2.500 2.500 2.500 6.500 0 9" stroke="#fff" strokeWidth="1.300" /></> },
];

function TaskBar() {
  return (
    <footer className="flex items-center h-10 border-t border-[#c3cfdf] bg-linear-to-r from-[#93a8c4] via-[#a4b8d0] to-[#7c91aa]">
      <button type="button" aria-label="Käynnistä" className="w-[54px] flex justify-center">
        <StartOrb />
      </button>
      <div className="flex gap-0.5 pl-1">
        {apps.map((a) => (
          <button
            key={a.label}
            type="button"
            aria-label={a.label}
            className={clsx(
              'flex items-center justify-center w-[60px] h-[38px] rounded-[3px]',
              a.open && 'border border-[#5d7088] shadow-[inset_0_0_0_1px_#dbe5f0]',
              a.open && (a.current ? 'bg-linear-to-br from-[#dce6f0] to-[#eef3f6]' : 'bg-linear-to-br from-[#c3d0e0] to-[#a9bad0]')
            )}
          >
            {a.icon}
          </button>
        ))}
      </div>
      <div className="flex items-center gap-3 ml-auto">
        <button type="button" aria-label="Kieli" className="text-[12px] leading-4 text-white">FI</button>
        <button type="button" aria-label="Näppäimistö">
          <Svg w={16}>
            <path d="M1 4.500h14v8H1z" fill="#e8e8e4" stroke="#70757a" />
            <path d="M3 7h10M3 9h10M5 11h6" stroke="#70757a" strokeDasharray="1 1" />
          </Svg>
        </button>
        <div className="flex items-center gap-2">
          {tray.map((t) => (
            <button key={t.name} type="button" aria-label={t.name}>
              <Svg w={16}>{t.art}</Svg>
            </button>
          ))}
        </div>
      </div>
      <time className="w-[73px] text-center text-[11px] leading-[17px] text-white">
        11:41
        <br />
        28.4.2017
      </time>
      <button
        type="button"
        aria-label="Näytä työpöytä"
        className="w-[22px] h-full border border-[#b4c0ce] bg-linear-to-br from-[#7a8795] to-[#5a6876]"
      />
    </footer>
  );
}

export default function App() {
  return (
    <div className="flex flex-col h-screen overflow-hidden font-['Open_Sans','Noto_Sans',sans-serif]">
      <TitleBar />
      <MenuBar />
      <Toolbar />
      <div className="flex flex-1 min-h-0">
        <SideBar />
        <div className="flex flex-1 min-w-0 border-l-2 border-t border-b-2 border-[#1c1c90]">
          <ScrollBar />
          <Board />
        </div>
      </div>
      <TaskBar />
    </div>
  );
}
